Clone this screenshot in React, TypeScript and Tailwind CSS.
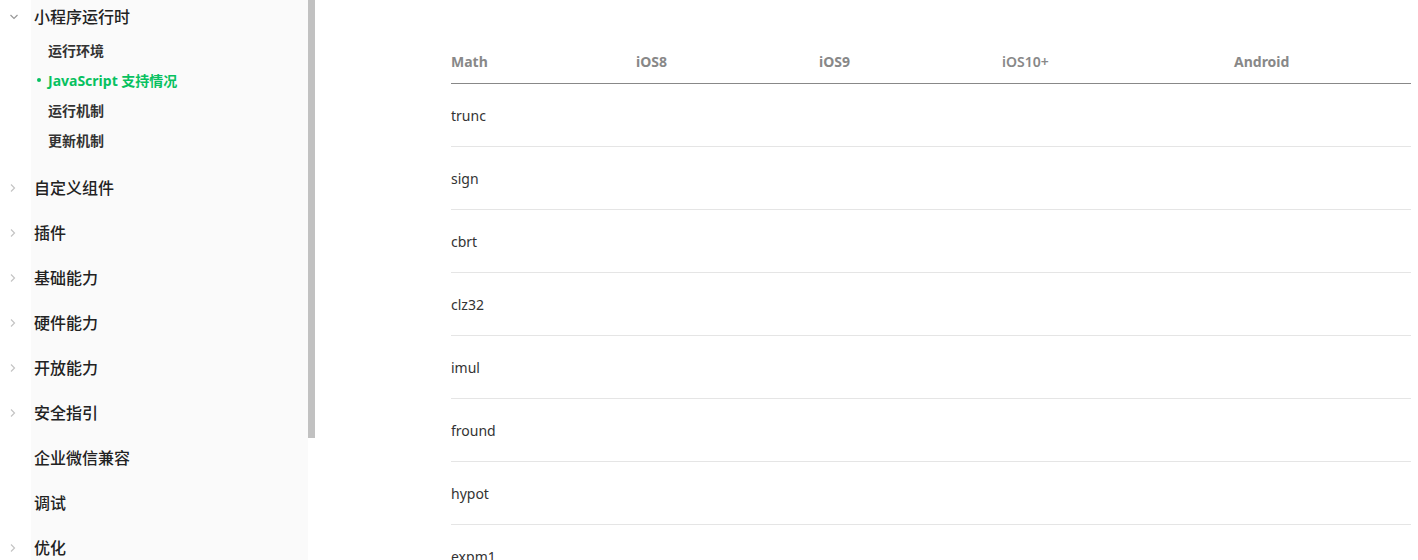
import React from "react";

const font = { fontFamily: '"Noto Sans", "Noto Sans CJK SC", sans-serif' };

function ChevronRight() {
  return (
    <svg width="8" height="10" viewBox="0 0 8 10" className="shrink-0">
      <polyline points="2,1.5 5.5,5 2,8.5" fill="none" stroke="#c4c4c4" strokeWidth="1.2" />
    </svg>
  );
}

function ChevronDown() {
  return (
    <svg width="10" height="8" viewBox="0 0 10 8" className="shrink-0">
      <polyline points="1.5,2 5,5.5 8.5,2" fill="none" stroke="#999" strokeWidth="1.2" />
    </svg>
  );
}

const topItems: { label: string; arrow: boolean }[] = [
  { label: "自定义组件", arrow: true },
  { label: "插件", arrow: true },
  { label: "基础能力", arrow: true },
  { label: "硬件能力", arrow: true },
  { label: "开放能力", arrow: true },
  { label: "安全指引", arrow: true },
  { label: "企业微信兼容", arrow: false },
  { label: "调试", arrow: false },
  { label: "优化", arrow: true },
];

const rows = ["trunc", "sign", "cbrt", "clz32", "imul", "fround", "hypot", "expm1"];

export default function App() {
  return (
    <div className="flex h-[560px] w-[1418px] overflow-hidden bg-white" style={font}>
      <div className="flex h-full w-[308px] shrink-0 overflow-hidden">
        <div className="w-[31px] shrink-0 bg-white">
          <div className="flex h-[34px] items-center justify-end pr-[12px]">
            <ChevronDown />
          </div>
          <div className="h-[131px]" />
          {topItems.map((t) => (
            <div key={t.label} className="flex h-[45px] items-center justify-end pr-[14px]">
              {t.arrow ? <ChevronRight /> : null}
            </div>
          ))}
        </div>
        <div className="flex-1 bg-[#fafafa]">
          <div className="flex h-[34px] items-center pl-[3px] text-[16px] font-medium text-[#222]">
            小程序运行时
          </div>
          <div className="pt-[1px] pb-[10px]">
            <div className="flex h-[30px] items-center pl-[17px] text-[14px] font-bold text-[#333]">运行环境</div>
            <div className="flex h-[30px] items-center pl-[6px] text-[14px] font-bold text-[#07c160]">
              <span className="mr-[7px] inline-block h-[4px] w-[4px] rounded-full bg-[#07c160]" />
              JavaScript 支持情况
            </div>
            <div className="flex h-[30px] items-center pl-[17px] text-[14px] font-bold text-[#333]">运行机制</div>
            <div className="flex h-[30px] items-center pl-[17px] text-[14px] font-bold text-[#333]">更新机制</div>
          </div>
          {topItems.map((t) => (
            <div key={t.label} className="flex h-[45px] items-center pl-[3px] text-[16px] font-medium text-[#222]">
              {t.label}
            </div>
          ))}
        </div>
      </div>
      <div className="h-full w-[7px] shrink-0 bg-white">
        <div className="h-[438px] w-full bg-[#c1c1c1]" />
      </div>
      <div className="flex-1 pl-[136px] pr-[7px] pt-[40px]">
        <div className="grid h-[44px] grid-cols-[185px_183px_183px_232px_1fr] items-center border-b border-[#888] text-[14px] font-bold text-[#888]">
          <div>Math</div>
          <div>iOS8</div>
          <div>iOS9</div>
          <div className="font-semibold">iOS10+</div>
          <div>Android</div>
        </div>
        {rows.map((r) => (
          <div key={r} className="flex h-[63px] items-center border-b border-[#e5e5e5] text-[14px] text-[#333]">
            {r}
          </div>
        ))}
      </div>
    </div>
  );
}
